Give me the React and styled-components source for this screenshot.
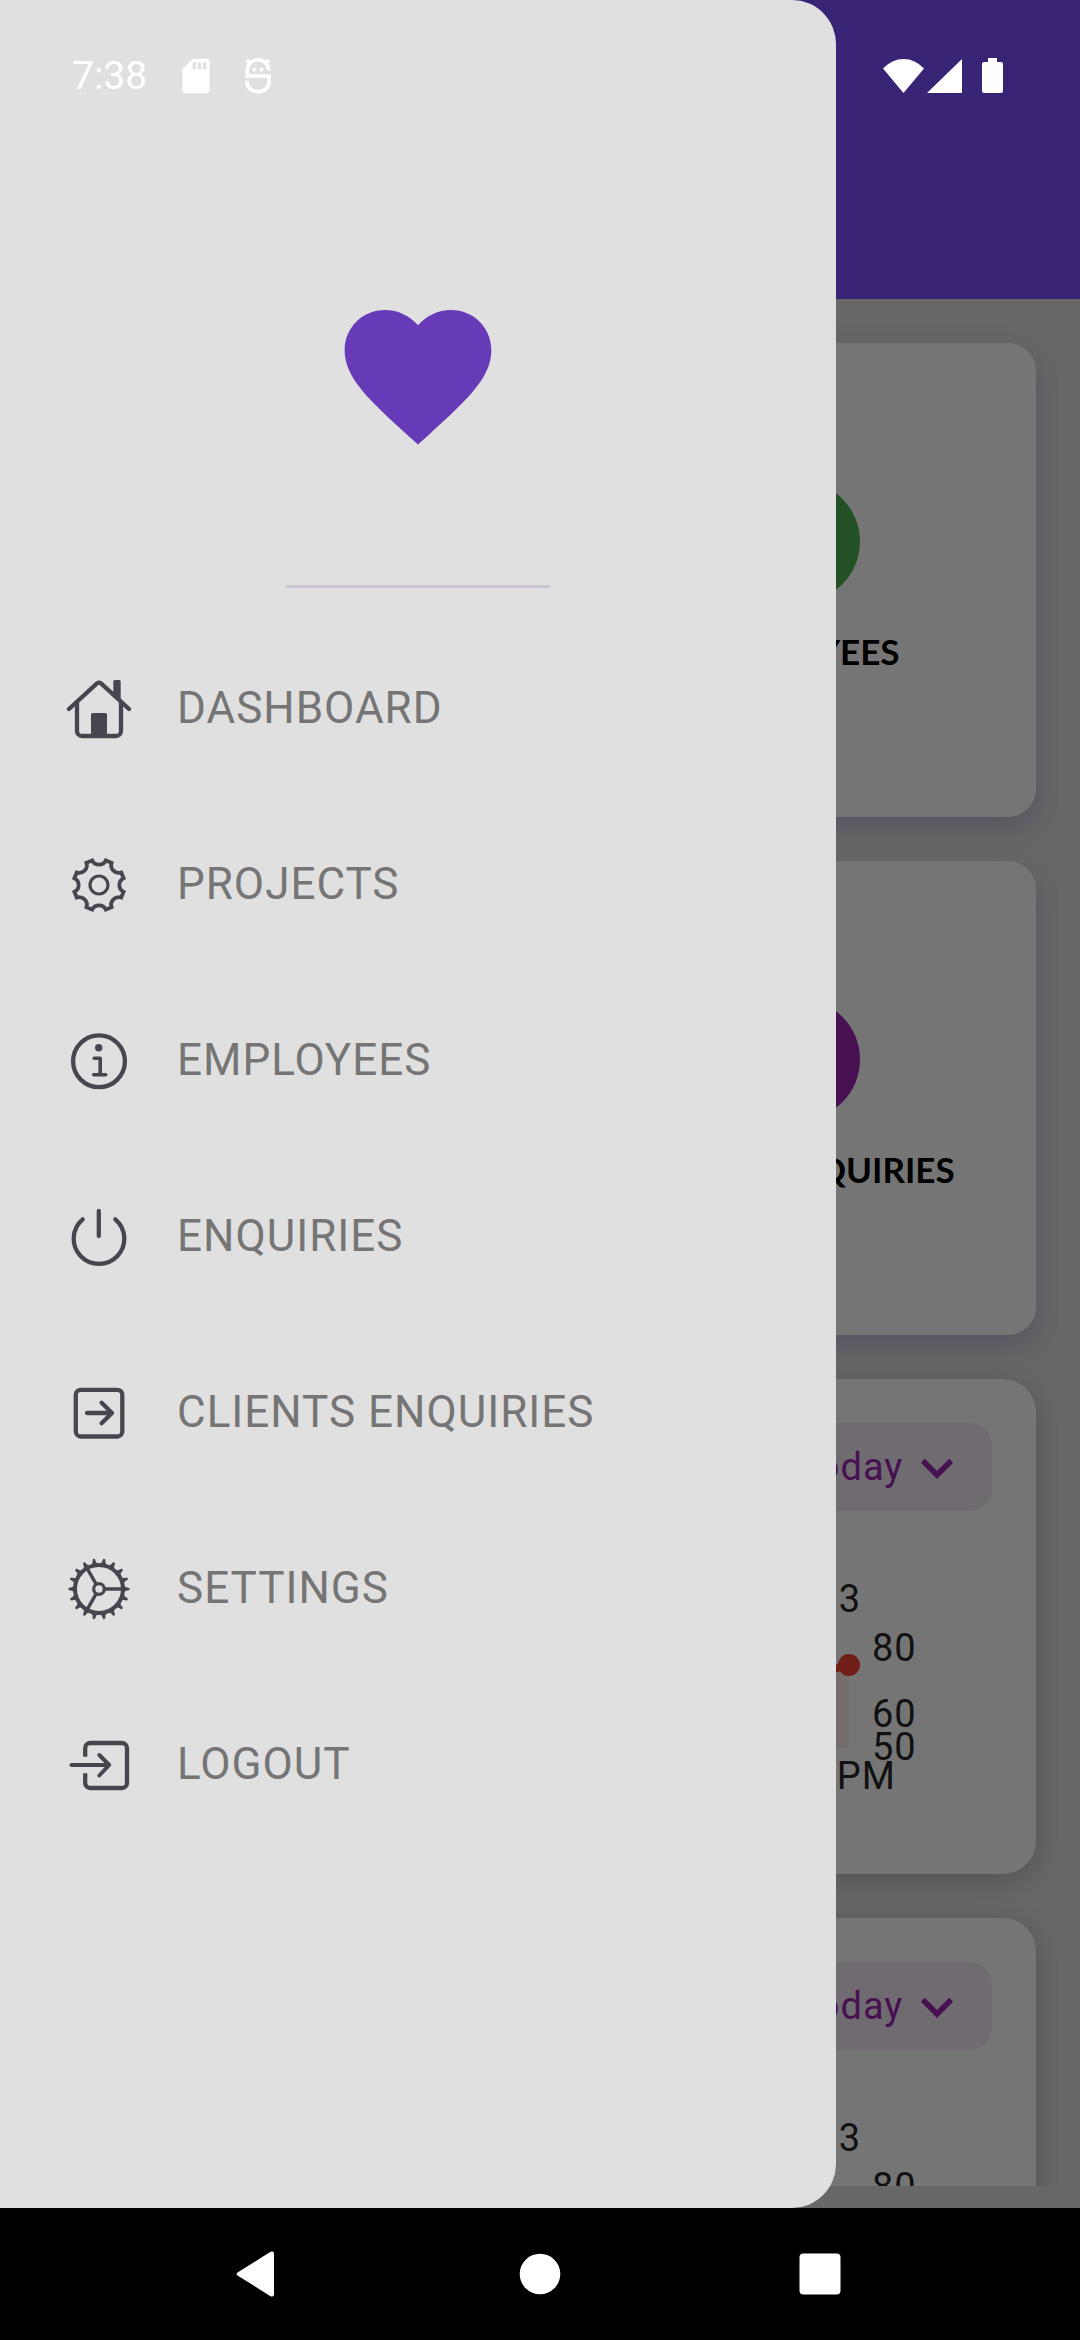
import React from "react";
import styled, { createGlobalStyle } from "styled-components";

const GlobalStyle = createGlobalStyle`
  *, *::before, *::after { box-sizing: border-box; }
  body {
    margin: 0;
    background: #000;
    font-family: Roboto, "Liberation Sans", sans-serif;
  }
`;

const Screen = styled.div`
  display: flex;
  flex-direction: column;
  height: 100vh;
`;

const Stage = styled.div`
  position: relative;
  flex: 1;
  min-height: 0;
  display: flex;
  flex-direction: column;
  overflow: hidden;
  background: #e0e0e0;
`;

const AppBar = styled.header`
  flex: none;
  height: 299px;
  background: #7c4dff;
`;

const Content = styled.main`
  flex: 1;
  min-height: 0;
  margin: 22px;
  padding: 22px;
  overflow: hidden;
  display: flex;
  flex-direction: column;
  gap: 44px;
`;

const StatGrid = styled.section`
  flex: none;
  display: grid;
  grid-template-columns: 1fr 1fr;
  gap: 44px;
`;

const StatCard = styled.article`
  grid-column: 2;
  aspect-ratio: 1;
  display: flex;
  flex-direction: column;
  align-items: center;
  justify-content: center;
  gap: 22px;
  border-radius: 28px;
  background: #fff;
  box-shadow: 0 11px 28px rgba(103, 58, 183, 0.26);
`;

const StatDisc = styled.div`
  width: 121px;
  height: 121px;
  border-radius: 50%;
  background: ${(p) => p.$color};
`;

const StatLabel = styled.h2`
  margin: 0;
  font-family: Lato, "Open Sans", sans-serif;
  font-size: 35px;
  font-weight: 700;
  line-height: 55px;
  white-space: nowrap;
  color: #000;
`;

const ChartCard = styled.article`
  flex: none;
  display: flex;
  flex-direction: column;
  gap: 44px;
  padding: 44px;
  border-radius: 33px;
  background: #fff;
  box-shadow: 0 6px 28px rgba(0, 0, 0, 0.2);
`;

const PeriodPicker = styled.label`
  align-self: flex-end;
  display: flex;
  align-items: center;
  gap: 11px;
  height: 88px;
  padding: 0 33px;
  border-radius: 22px;
  background: rgba(156, 39, 176, 0.1);
  color: #9c27b0;
`;

const PeriodSelect = styled.select`
  appearance: none;
  margin: 0;
  padding: 0;
  border: 0;
  background: none;
  color: inherit;
  font-family: inherit;
  font-size: 38px;
  letter-spacing: 1px;
  line-height: 44px;
`;

const ChartSvg = styled.svg`
  display: block;
  width: 100%;
  height: auto;

  text {
    font-size: 38px;
    letter-spacing: 1px;
    fill: rgba(0, 0, 0, 0.87);
  }
`;

const Scrim = styled.div`
  position: absolute;
  inset: 0;
  background: rgba(0, 0, 0, 0.54);
`;

const Drawer = styled.aside`
  position: absolute;
  inset: 0 auto 0 0;
  width: min(836px, 78vw);
  display: flex;
  flex-direction: column;
  align-items: center;
  padding-top: 288px;
  border-radius: 0 44px 44px 0;
  background: #e0e0e0;
`;

const Heart = styled.svg`
  width: 176px;
  height: 176px;
  fill: #673ab7;
`;

const Divider = styled.hr`
  width: 264px;
  height: 3px;
  margin: 121px 0 32px;
  border: 0;
  background: #cac4d0;
`;

const Menu = styled.nav`
  align-self: stretch;
  display: flex;
  flex-direction: column;
`;

const MenuLink = styled.a`
  display: flex;
  align-items: center;
  gap: 45px;
  height: 176px;
  padding: 0 66px;
  color: #757575;
  font-size: 44px;
  letter-spacing: 1px;
  line-height: 66px;
  text-decoration: none;
`;

const MenuIcon = styled.svg`
  flex: none;
  width: 66px;
  height: 66px;
  fill: none;
  stroke: #49454f;
  stroke-width: 4.3;
  stroke-linecap: round;
  stroke-linejoin: round;

  .solid { fill: #49454f; stroke: none; }
`;

const StatusBar = styled.div`
  position: absolute;
  inset: 0 0 auto 0;
  display: flex;
  align-items: center;
  justify-content: space-between;
  height: 152px;
  padding: 0 72px;
  color: #fff;
  font-size: 39px;
`;

const StatusGroup = styled.div`
  display: flex;
  align-items: center;
  gap: ${(p) => p.$gap}px;
`;

const StatusIcon = styled.svg`
  display: block;
  width: ${(p) => p.$w}px;
  height: 36px;
  fill: #fff;
`;

const SystemNav = styled.nav`
  flex: none;
  display: flex;
  justify-content: center;
  height: 132px;
  background: #000;
`;

const SystemButton = styled.button`
  display: flex;
  align-items: center;
  justify-content: center;
  flex: 0 1 280px;
  padding: 0;
  border: 0;
  background: none;

  svg { width: 48px; height: 48px; fill: #fff; }
`;

const point = (cx, cy, r, deg) => {
  const a = (deg * Math.PI) / 180;
  return `${(cx + r * Math.cos(a)).toFixed(2)} ${(cy + r * Math.sin(a)).toFixed(2)}`;
};

/* Eight flat teeth joined by scooped arcs. */
const gearPath =
  Array.from({ length: 8 }, (_, k) => {
    const mid = k * 45 + 22.5;
    const start = point(33, 34, 25.5, mid - 7);
    const end = point(33, 34, 25.5, mid + 7);
    const next = point(33, 34, 25.5, mid + 38);
    return `${k ? "" : `M${start}`}L${end}A7.6 7.6 0 0 0 ${next}`;
  }).join("") + "Z";

/* Eighteen pointed teeth round the cog wheel. */
const cogTeeth = Array.from({ length: 18 }, (_, k) => {
  const a = k * 20;
  return `M${point(33, 34, 25, a - 7)}Q${point(33, 34, 27, a - 3)} ${point(33, 34, 30.5, a - 2)}L${point(33, 34, 30.5, a + 2)}Q${point(33, 34, 27, a + 3)} ${point(33, 34, 25, a + 7)}Z`;
}).join("");

const icons = {
  home: (
    <>
      <path d="M3 34 31 8.400q2-1.600 4 0L63 34" />
      <path d="M11 28v28a5 5 0 0 0 5 5h34a5 5 0 0 0 5-5V28" />
      <path className="solid" d="M25 39.500a1.500 1.500 0 0 1 1.500-1.500h13a1.500 1.500 0 0 1 1.500 1.500V61H25zM47.300 6.500A1.500 1.500 0 0 1 48.800 5h4.400a1.500 1.500 0 0 1 1.500 1.500V27l-7.400-6.500z" />
    </>
  ),
  gear: (
    <>
      <path d={gearPath} strokeWidth="3.800" strokeLinejoin="miter" />
      <circle cx="33" cy="34" r="9" strokeWidth="3.200" />
    </>
  ),
  info: (
    <>
      <circle cx="33" cy="34.300" r="25.900" />
      <circle className="solid" cx="32.700" cy="20.700" r="3.700" />
      <path d="M28.200 31.200h6v16.500M27.700 47.700h12" strokeWidth="3.600" />
    </>
  ),
  power: (
    <path d="M16.700 16.300a25.300 25.300 0 1 0 32.600 0M32.800 8v25" />
  ),
  enter: (
    <>
      <rect x="9.800" y="10.800" width="46.500" height="46.700" rx="5" />
      <path d="M21 34h25M35.600 23.800 46 34 35.600 44.200" />
    </>
  ),
  cog: (
    <>
      <circle cx="33" cy="34" r="24" strokeWidth="4" />
      <path className="solid" d={cogTeeth} />
      <circle cx="33" cy="34" r="5.300" strokeWidth="3.200" />
      <path
        d={`M38.500 34H57M${point(33, 34, 6, 120)}L${point(33, 34, 23, 120)}M${point(33, 34, 6, 240)}L${point(33, 34, 23, 240)}`}
        strokeWidth="3.400"
      />
    </>
  ),
  logout: (
    <>
      <path d="M19.200 25.700V17a5 5 0 0 1 5-5H56a5 5 0 0 1 5 5v35a5 5 0 0 1-5 5H24.200a5 5 0 0 1-5-5v-9.700" strokeLinecap="butt" />
      <path d="M5.500 34H43M33.300 24 43.200 34l-9.900 10.500" strokeWidth="4" />
    </>
  ),
};

const menuItems = [
  { icon: "home", label: "DASHBOARD" },
  { icon: "gear", label: "PROJECTS" },
  { icon: "info", label: "EMPLOYEES" },
  { icon: "power", label: "ENQUIRIES" },
  { icon: "enter", label: "CLIENTS ENQUIRIES" },
  { icon: "cog", label: "SETTINGS" },
  { icon: "logout", label: "LOGOUT" },
];

const axisTicks = [
  { value: 80, y: 106 },
  { value: 60, y: 172 },
  { value: 50, y: 205 },
];

function TrendCard() {
  return (
    <ChartCard>
      <PeriodPicker>
        <PeriodSelect aria-label="Period" defaultValue="Today">
          <option>Today</option>
        </PeriodSelect>
        <svg width="44" height="44" viewBox="0 0 24 24" fill="currentColor" aria-hidden="true">
          <path d="M5.350 7.550 12 14.200l6.650-6.650 2.150 2.150L12 18.500 3.200 9.700z" />
        </svg>
      </PeriodPicker>
      <ChartSvg viewBox="0 0 904 275" role="img" aria-label="Trend">
        <path d="M661 136 761 110V193H661Z" fill="#f44336" fillOpacity="0.1" />
        <path d="M661 136 761 110" stroke="#f44336" strokeWidth="8" strokeLinecap="round" />
        <circle cx="761" cy="110" r="11" fill="#f44336" />
        <text x="762" y="57" textAnchor="middle">3</text>
        {axisTicks.map((t) => (
          <text key={t.value} x="784" y={t.y}>{t.value}</text>
        ))}
        <text x="762" y="234" textAnchor="middle">3 PM</text>
      </ChartSvg>
    </ChartCard>
  );
}

export default function App() {
  return (
    <Screen>
      <GlobalStyle />
      <Stage>
        <AppBar />
        <Content>
          <StatGrid>
            <StatCard>
              <StatDisc $color="#4caf50" />
              <StatLabel>EMPLOYEES</StatLabel>
            </StatCard>
            <StatCard>
              <StatDisc $color="#9c27b0" />
              <StatLabel>CLIENT ENQUIRIES</StatLabel>
            </StatCard>
          </StatGrid>
          <TrendCard />
          <TrendCard />
        </Content>
        <Scrim />
        <Drawer>
          <Heart viewBox="0 0 24 24" aria-hidden="true">
            <path d="M12 21.350l-1.450-1.320C5.400 15.360 2 12.280 2 8.500 2 5.420 4.420 3 7.500 3c1.740 0 3.410.81 4.500 2.090C13.090 3.810 14.760 3 16.500 3 19.580 3 22 5.420 22 8.500c0 3.780-3.400 6.860-8.550 11.540L12 21.350z" />
          </Heart>
          <Divider />
          <Menu>
            {menuItems.map((item) => (
              <MenuLink key={item.label} href="#">
                <MenuIcon viewBox="0 0 66 66" aria-hidden="true">{icons[item.icon]}</MenuIcon>
                {item.label}
              </MenuLink>
            ))}
          </Menu>
        </Drawer>
        <StatusBar>
          <StatusGroup $gap={35}>
            <span>7:38</span>
            <StatusIcon $w={28} viewBox="4 1.500 16 21" aria-hidden="true">
              <path d="M18 2h-8L4.020 8 4 20c0 1.100.9 2 2 2h12c1.100 0 2-.9 2-2V4c0-1.100-.9-2-2-2zm-6 6h-2V4h2v4zm3 0h-2V4h2v4zm3 0h-2V4h2v4z" />
            </StatusIcon>
            <StatusIcon $w={26} viewBox="0 0 26 36" aria-hidden="true">
              <path
                d="M23.700 12.500a10.700 10.700 0 0 0-21.400 0v5.500h21.700V24a11 9.800 0 0 1-22 0v-1.500M5 5 2 2M21 5l3-3"
                fill="none"
                stroke="#fff"
                strokeWidth="3.600"
              />
              <circle cx="9.300" cy="11.500" r="1.900" />
              <circle cx="16.500" cy="11.500" r="1.900" />
            </StatusIcon>
          </StatusGroup>
          <StatusGroup $gap={3}>
            <StatusIcon $w={41} viewBox="0 0 41 36" aria-hidden="true">
              <path d="M0 10.500Q9 1 20.500 1T41 10.500L20.500 35z" />
            </StatusIcon>
            <StatusIcon $w={35} viewBox="0 0 35 36" aria-hidden="true">
              <path d="M35 1v34H0z" />
            </StatusIcon>
            <StatusIcon $w={43} viewBox="0 0 43 36" aria-hidden="true">
              <path d="M23 0h9v4h4q2 0 2 2v27q0 2-2 2H19q-2 0-2-2V6q0-2 2-2h4z" />
            </StatusIcon>
          </StatusGroup>
        </StatusBar>
      </Stage>
      <SystemNav>
        <SystemButton aria-label="Back">
          <svg viewBox="0 0 48 48">
            <path d="M1.500 22.500 34.500 1.800q3.500-1.300 3.500 2v40.400q0 3.300-3.500 2L1.500 25.500q-1.800-1.500 0-3z" />
          </svg>
        </SystemButton>
        <SystemButton aria-label="Home">
          <svg viewBox="0 0 48 48">
            <circle cx="24" cy="24" r="20.300" />
          </svg>
        </SystemButton>
        <SystemButton aria-label="Recents">
          <svg viewBox="0 0 48 48">
            <rect x="3.500" y="3.500" width="41" height="41" rx="4" />
          </svg>
        </SystemButton>
      </SystemNav>
    </Screen>
  );
}
